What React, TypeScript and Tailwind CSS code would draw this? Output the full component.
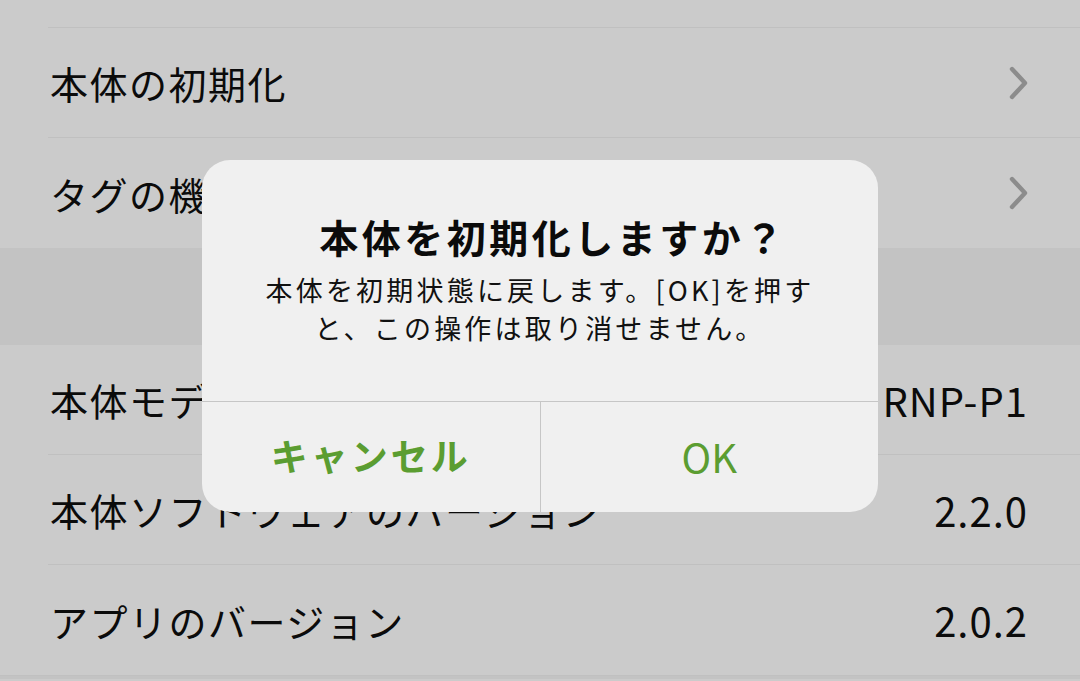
const font = { fontFamily: '"Noto Sans CJK JP", "Noto Sans", sans-serif' }

function Chevron() {
  return (
    <svg width="22" height="38" viewBox="0 0 22 38" className="-mr-[2px]">
      <polyline points="4,5 17,19 4,33" fill="none" stroke="#8c8c8c" strokeWidth="4.4" strokeLinecap="round" strokeLinejoin="round" />
    </svg>
  )
}

function Row({ label, value, chevron, last }: { label: string; value?: string; chevron?: boolean; last?: boolean }) {
  return (
    <div className="pl-[48px]">
      <div className={`h-[110px] flex items-center justify-between pr-[52px] ${last ? '' : 'border-b border-[#c0c0c0]'}`}>
        <span className="pl-[2px] text-[38px] tracking-[1.5px] text-[#0b0b0b]">{label}</span>
        {value && <span className="text-[40px] tracking-[1px] text-[#0b0b0b]">{value}</span>}
        {chevron && <Chevron />}
      </div>
    </div>
  )
}

export default function App() {
  return (
    <div style={font} className="relative w-[1080px] h-[681px] overflow-hidden bg-[#cbcbcb]">
      <div className="h-[28px] ml-[48px] border-b border-[#c0c0c0]" />
      <Row label="本体の初期化" chevron />
      <Row label="タグの機能設定" chevron last />
      <div className="h-[97px] bg-[#c3c3c3]" />
      <Row label="本体モデル" value="RNP-P1" />
      <Row label="本体ソフトウェアのバージョン" value="2.2.0" />
      <Row label="アプリのバージョン" value="2.0.2" last />
      <div className="border-t border-[#c0c0c0] h-[4px] bg-[#c3c3c3]" />

      {/* alert */}
      <div className="absolute left-[202px] top-[160px] w-[676px] h-[352px] rounded-[28px] bg-[#f0f0f0] flex flex-col overflow-hidden">
        <div className="h-[242px] pt-[52px] flex flex-col items-center border-b border-[#c6c6c6]">
          <div className="text-[39px] leading-[48px] font-bold tracking-[3.5px] text-[#0b0b0b] pl-[26px]">本体を初期化しますか？</div>
          <div className="mt-[11px] text-[27px] leading-[38px] tracking-[3.2px] text-[#111] text-center">
            <div>本体を初期状態に戻します。[OK]を押す</div>
            <div>と、この操作は取り消せません。</div>
          </div>
        </div>
        <div className="flex-1 flex">
          <div className="flex-1 flex items-center justify-center border-r border-[#c6c6c6] pb-[2px]">
            <span className="text-[37px] font-bold tracking-[3px] text-[#5b9d31]">キャンセル</span>
          </div>
          <div className="flex-1 flex items-center justify-center pb-[2px]">
            <span className="text-[40px] text-[#5b9d31]">OK</span>
          </div>
        </div>
      </div>
    </div>
  )
}
